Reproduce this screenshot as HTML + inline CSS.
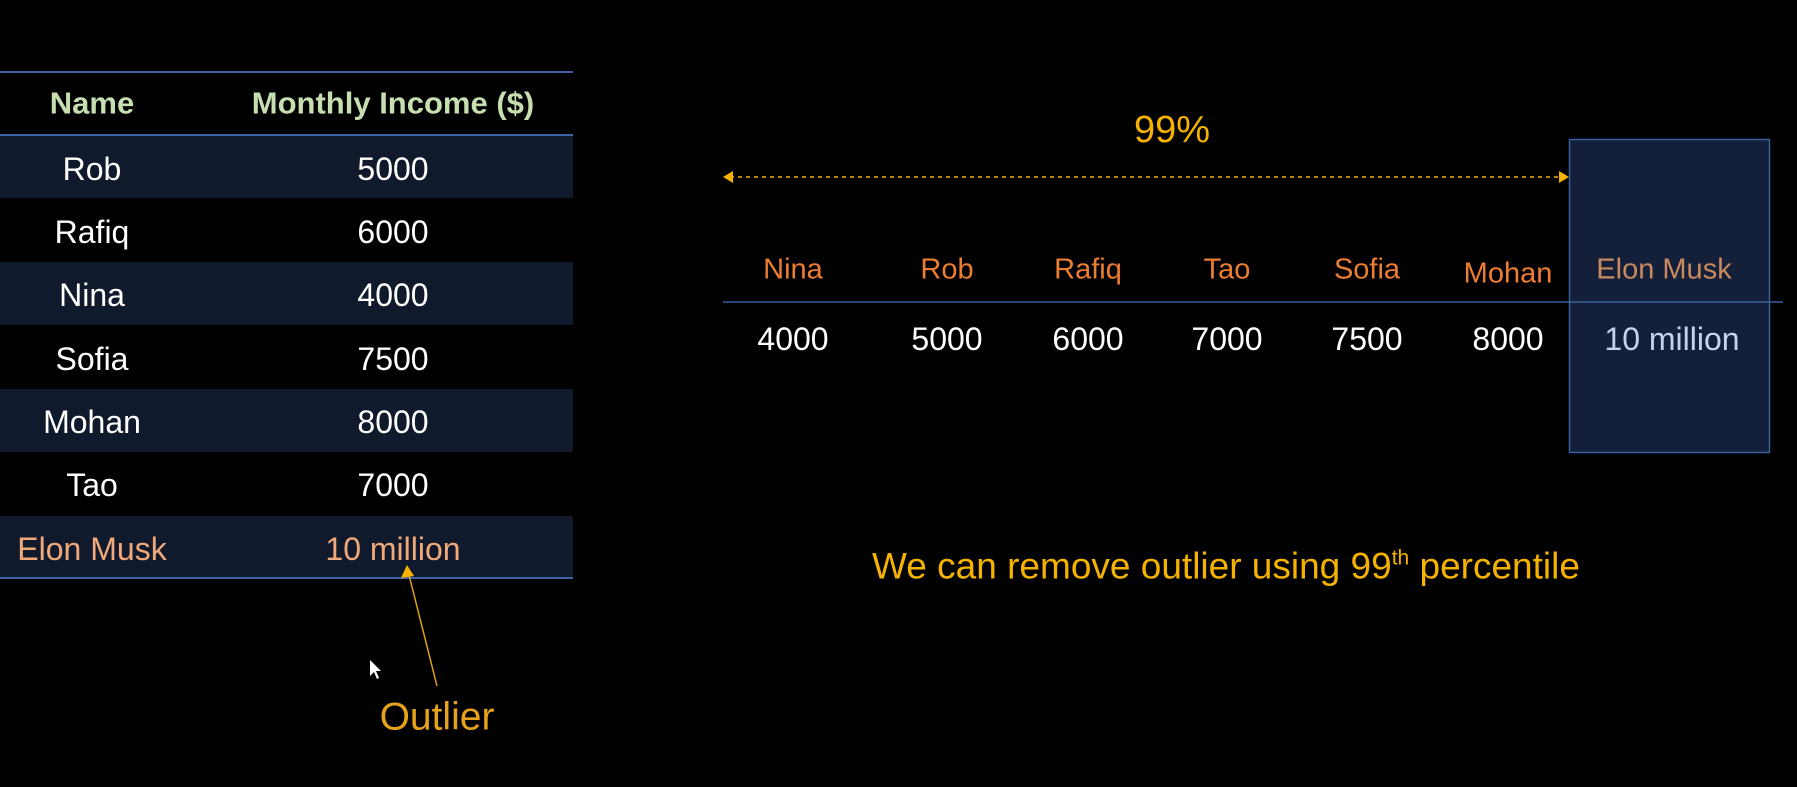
<!DOCTYPE html>
<html><head><meta charset="utf-8"><style>
html,body{margin:0;padding:0;background:#000;}
body{width:1797px;height:787px;position:relative;overflow:hidden;font-family:"Liberation Sans",sans-serif;}
.a{position:absolute;white-space:nowrap;transform:translate(-50%,-50%);line-height:1;}
.row{position:absolute;left:0;width:573px;height:63.4px;}
.odd{background:#111a2c;}
.t{font-size:32px;color:#fff;}
.h{font-size:31px;font-weight:bold;color:#c6deb0;}
.n{font-size:29px;color:#ed7d31;}
.v{font-size:32px;color:#fff;}
</style></head><body>
<div style="position:absolute;left:0;top:71px;width:573px;height:2px;background:#3f63a8"></div>
<div class="a h" style="left:92px;top:103px">Name</div>
<div class="a h" style="left:393px;top:103px">Monthly Income ($)</div>
<div class="row odd" style="top:135px"></div>
<div class="row" style="top:198px"></div>
<div class="row odd" style="top:262px"></div>
<div class="row" style="top:325px"></div>
<div class="row odd" style="top:389px"></div>
<div class="row" style="top:452px"></div>
<div class="row odd" style="top:516px"></div>
<div style="position:absolute;left:0;top:134px;width:573px;height:2px;background:#3f63a8"></div>
<div style="position:absolute;left:0;top:577px;width:573px;height:2px;background:#3f63a8"></div>
<div class="a t" style="left:92px;top:169px">Rob</div><div class="a t" style="left:393px;top:169px">5000</div>
<div class="a t" style="left:92px;top:232px">Rafiq</div><div class="a t" style="left:393px;top:232px">6000</div>
<div class="a t" style="left:92px;top:295px">Nina</div><div class="a t" style="left:393px;top:295px">4000</div>
<div class="a t" style="left:92px;top:359px">Sofia</div><div class="a t" style="left:393px;top:359px">7500</div>
<div class="a t" style="left:92px;top:422px">Mohan</div><div class="a t" style="left:393px;top:422px">8000</div>
<div class="a t" style="left:92px;top:485px">Tao</div><div class="a t" style="left:393px;top:485px">7000</div>
<div class="a t" style="left:92px;top:549px;color:#f2a97a">Elon Musk</div><div class="a t" style="left:393px;top:549px;color:#f2a97a">10 million</div>
<svg style="position:absolute;left:0;top:0" width="1797" height="787">
<line x1="437" y1="686" x2="409" y2="575" stroke="#e0a01a" stroke-width="1.5"/>
<polygon points="407,565 401,578 414,576" fill="#f5b300"/>
<line x1="730" y1="177" x2="1562" y2="177" stroke="#f0b020" stroke-width="1.5" stroke-dasharray="4,4"/>
<polygon points="723,177 733,171 733,183" fill="#f5b300"/>
<polygon points="1569,177 1559,171 1559,183" fill="#f5b300"/>
<rect x="1569.5" y="139.5" width="200" height="313" fill="#14203a" stroke="#3a5f9e" stroke-width="1.5"/>
<line x1="723" y1="302" x2="1783" y2="302" stroke="#3a5f9e" stroke-width="1.5"/>
<path d="M370,660 L370,676 L374,672 L377,679 L379,678 L376,671 L381,671 Z" fill="#fff"/>
</svg>
<div class="a" style="left:437px;top:717px;font-size:39px;color:#e6a21a">Outlier</div>
<div class="a" style="left:1172px;top:130px;font-size:38px;color:#f5b300">99%</div>
<div class="a n" style="left:793px;top:270px">Nina</div>
<div class="a n" style="left:947px;top:270px">Rob</div>
<div class="a n" style="left:1088px;top:270px">Rafiq</div>
<div class="a n" style="left:1227px;top:270px">Tao</div>
<div class="a n" style="left:1367px;top:270px">Sofia</div>
<div class="a n" style="left:1508px;top:274px">Mohan</div>
<div class="a n" style="left:1664px;top:270px;color:#c98a5e">Elon Musk</div>
<div class="a v" style="left:793px;top:339px">4000</div>
<div class="a v" style="left:947px;top:339px">5000</div>
<div class="a v" style="left:1088px;top:339px">6000</div>
<div class="a v" style="left:1227px;top:339px">7000</div>
<div class="a v" style="left:1367px;top:339px">7500</div>
<div class="a v" style="left:1508px;top:339px">8000</div>
<div class="a v" style="left:1672px;top:339px;color:#c5d3ef">10 million</div>
<div class="a" style="left:1226px;top:566px;font-size:37px;color:#f5b300">We can remove outlier using 99<sup style="font-size:21px;vertical-align:14px">th</sup> percentile</div>
</body></html>
